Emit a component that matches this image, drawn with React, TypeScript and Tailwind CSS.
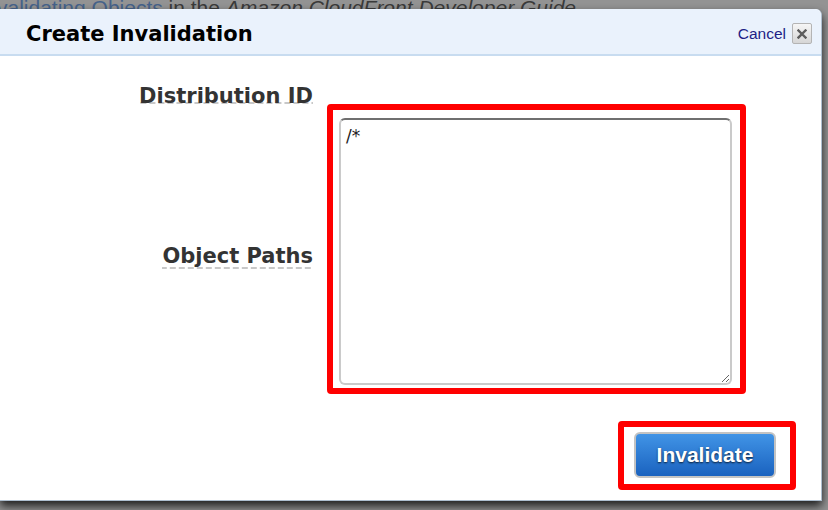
import React from "react";

function CloseBox() {
  return (
    <button className="w-[20px] h-[21px] flex items-center justify-center rounded-[2px] border border-[#b4b4b4] bg-linear-to-b from-[#f6f6f6] to-[#d6d6d6]">
      <svg width="10" height="10" viewBox="0 0 10 10">
        <path d="M1.5 1.5 L8.5 8.5 M8.5 1.5 L1.5 8.5" stroke="#5c5c5c" strokeWidth="2.4" strokeLinecap="square" />
      </svg>
    </button>
  );
}

function FieldLabel({ children }: { children: React.ReactNode }) {
  return (
    <span className="text-[21px] leading-[21px] font-bold text-[#333333] pb-[2px] bg-[linear-gradient(to_right,#c8c8c8_6px,transparent_6px)] bg-[length:9px_2px] bg-repeat-x bg-bottom">
      {children}
    </span>
  );
}

export default function App() {
  return (
    <div className="w-[828px] h-[510px] overflow-hidden bg-[#939393] flex flex-col font-['DejaVu_Sans',sans-serif]">
      {/* page behind the dialog */}
      <div className="h-[9px] shrink-0 overflow-hidden">
        <p className="-mt-[4px] -ml-[3px] whitespace-nowrap text-[21px] leading-[23px] text-[#3a3a3a] font-['Liberation_Sans',Arial,sans-serif]">
          <span className="text-[#45628a]">validating Objects</span> in the <i>Amazon CloudFront Developer Guide</i>
        </p>
      </div>

      <div className="w-[822px] h-[492px] shrink-0 bg-white rounded-tr-[6px] border-r border-b border-[#aebfd0] shadow-[0_5px_10px_rgba(0,0,0,0.8)] flex flex-col">
        <div className="h-[47px] shrink-0 bg-[#eaf2fc] border-b-2 border-[#c8dcf0] rounded-tr-[6px] flex items-center justify-between pl-[26px] pr-[9px]">
          <h2 className="pt-[4px] text-[21px] leading-[24px] font-bold text-black">Create Invalidation</h2>
          <div className="flex items-center gap-[6px] pt-[4px]">
            <span className="text-[15.5px] leading-[18px] text-[#1e1e86] font-['Liberation_Sans',Arial,sans-serif]">Cancel</span>
            <CloseBox />
          </div>
        </div>

        <div className="flex-1 flex flex-col pt-[30px]">
          <div className="flex h-[18px]">
            <div className="w-[313px] flex justify-end">
              <FieldLabel>Distribution ID</FieldLabel>
            </div>
          </div>

          <div className="flex">
            <div className="w-[313px] flex justify-end items-start pt-[142px]">
              <FieldLabel>Object Paths</FieldLabel>
            </div>
            <div className="ml-[14px] w-[419px] h-[290px] border-[6px] border-[#ff0000] rounded-[4px] pt-[8px] pl-[6px]">
              <textarea
                defaultValue="/*"
                className="block w-[393px] h-[267px] rounded-[6px] border-2 border-[#cacaca] border-t-[#6f6f6f] pt-[6px] pl-[5px] text-[17px] leading-[20px] text-[#222222] font-['DejaVu_Sans',sans-serif] outline-none"
              />
            </div>
          </div>

          <div className="flex justify-end pr-[25px] mt-[27px]">
            <div className="w-[178px] h-[69px] border-[6px] border-[#ff0000] rounded-[4px] pl-[10px] pt-[5px]">
              <button className="w-[142px] h-[46px] rounded-[6px] border-2 border-[#c3c3c3] bg-linear-to-b from-[#4194e6] to-[#1a62bf] text-white font-bold text-[21px] leading-[24px] font-['Liberation_Sans',Arial,sans-serif] [text-shadow:0_1px_2px_rgba(0,0,0,0.75)]">
                Invalidate
              </button>
            </div>
          </div>
        </div>
      </div>
    </div>
  );
}
